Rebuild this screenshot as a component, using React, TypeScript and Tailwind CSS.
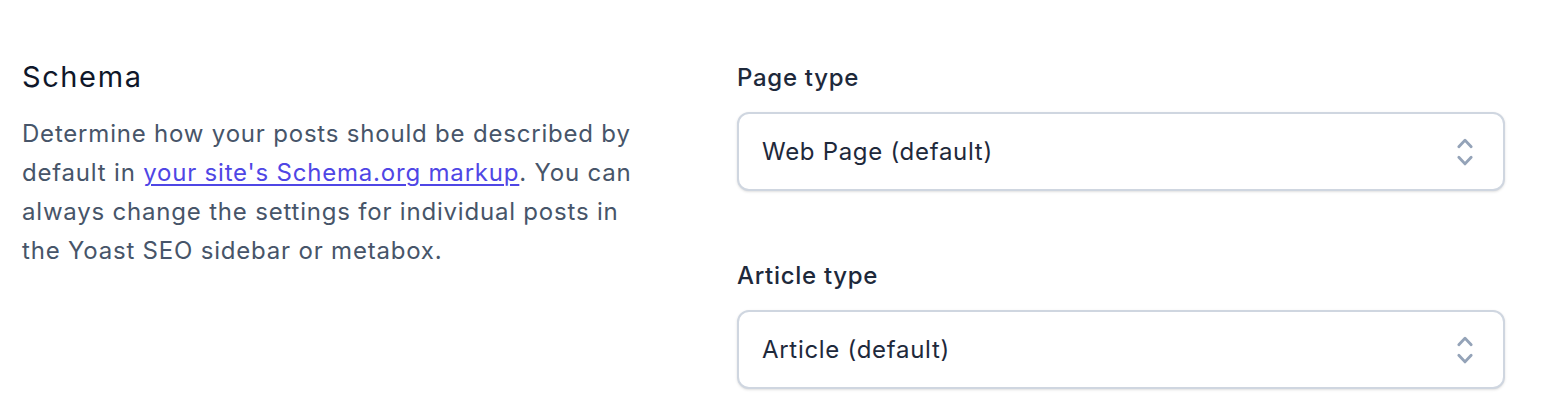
import React from "react";

function ChevronUpDown() {
  return (
    <svg viewBox="0 0 20 20" fill="currentColor" className="h-[38px] w-[38px] flex-none text-[#94a3b8]" aria-hidden>
      <path
        fillRule="evenodd"
        d="M10 3a.75.75 0 01.55.24l3.25 3.5a.75.75 0 11-1.1 1.02L10 4.852 7.3 7.76a.75.75 0 01-1.1-1.02l3.25-3.5A.75.75 0 0110 3zm-3.76 9.2a.75.75 0 011.06.04l2.7 2.908 2.7-2.908a.75.75 0 111.1 1.02l-3.25 3.5a.75.75 0 01-1.1 0l-3.25-3.5a.75.75 0 01.04-1.06z"
        clipRule="evenodd"
      />
    </svg>
  );
}

function SelectField({ label, value }: { label: string; value: string }) {
  return (
    <div>
      <label className="block text-[24px] font-medium leading-[32px] tracking-[0.7px] text-[#1e293b]">{label}</label>
      <div className="mt-[18px] flex h-[79px] items-center justify-between rounded-[12px] border-2 border-[#cfd6e0] bg-white pl-[23px] pr-[19px] shadow-sm">
        <span className="text-[24px] tracking-[0.7px] text-[#1e293b]">{value}</span>
        <ChevronUpDown />
      </div>
    </div>
  );
}

export default function App() {
  return (
    <div className="h-[414px] w-[1552px] bg-white font-['Inter',sans-serif]">
      <div className="grid grid-cols-[715px_768px] pl-[22px] pt-[57px]">
        <div className="max-w-[625px]">
          <h2 className="text-[29px] font-normal leading-[40px] tracking-[1.6px] text-[#0f172a]">Schema</h2>
          <p className="mt-[17px] text-[24px] leading-[39px] tracking-[0.8px] text-[#475569]">
            Determine how your posts should be described by default in{" "}
            <a href="#" className="text-[#4f46e5] underline decoration-2 underline-offset-[3px]">
              your site's Schema.org markup
            </a>
            . You can always change the settings for individual posts in the Yoast SEO sidebar or metabox.
          </p>
        </div>
        <div className="flex flex-col gap-[69px] pt-[5px]">
          <SelectField label="Page type" value="Web Page (default)" />
          <SelectField label="Article type" value="Article (default)" />
        </div>
      </div>
    </div>
  );
}
